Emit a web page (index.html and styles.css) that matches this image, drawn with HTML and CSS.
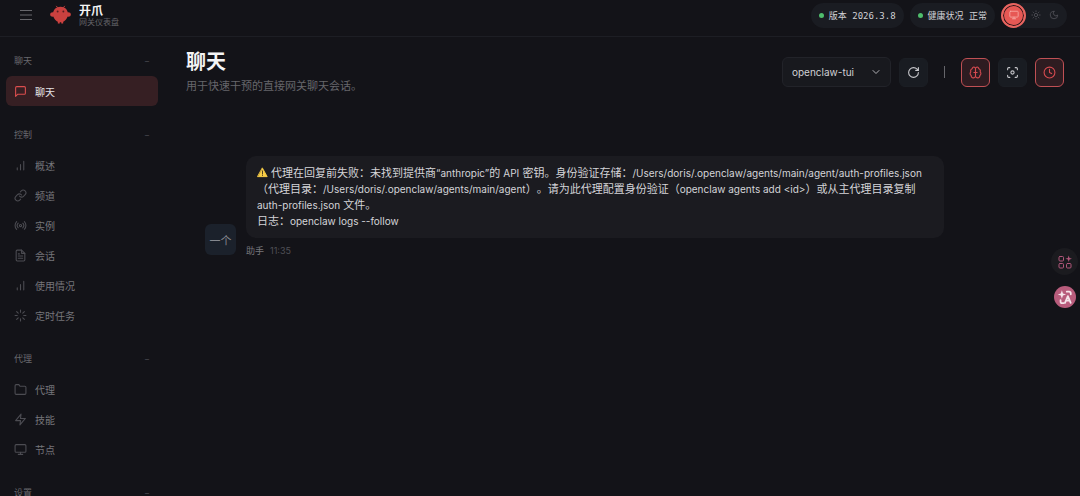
FILE: index.html
```html
<!DOCTYPE html>
<html lang="zh-CN">
<head>
    <meta charset="UTF-8">
    <meta name="viewport" content="width=device-width, initial-scale=1.0">
    <title>开爪 - 网关仪表盘</title>
    <link rel="stylesheet" href="styles.css">
</head>
<body>
    <header class="topbar">
        <button class="menu-btn" type="button" aria-label="菜单">
            <svg viewBox="0 0 12 12"><path d="M0 1.500h12M0 6h12M0 10.500h12"/></svg>
        </button>
        <div class="brand">
            <svg class="brand-logo" viewBox="0 0 22 20">
                <path class="feeler" d="M8 2 6.500.8M14 2 15.500.8"/>
                <ellipse class="claw" cx="3" cy="9.500" rx="2.800" ry="2.300"/>
                <ellipse class="claw" cx="19" cy="9.500" rx="2.800" ry="2.300"/>
                <path class="claw" d="M11 1.300c4.900 0 7.800 3.300 7.800 7.600 0 3.600-2.300 6.800-5 8.100v2h-2v-1.500h-1.600V19h-2v-2c-2.700-1.300-5-4.500-5-8.100 0-4.300 2.900-7.600 7.800-7.600z"/>
                <circle class="eye" cx="8" cy="6.300" r="1"/>
                <circle class="eye" cx="14" cy="6.300" r="1"/>
            </svg>
            <div class="brand-text">
                <div class="brand-title">开爪</div>
                <div class="brand-sub">网关仪表盘</div>
            </div>
        </div>
        <div class="status-bar">
            <div class="pill"><span class="dot"></span><span>版本 2026.3.8</span></div>
            <div class="pill"><span class="dot"></span><span>健康状况 正常</span></div>
            <div class="theme-toggle">
                <button class="theme-btn active" type="button" aria-label="跟随系统">
                    <svg viewBox="0 0 24 24"><rect x="2" y="3" width="20" height="14" rx="2"/><path d="M8 21h8M12 17v4"/></svg>
                </button>
                <button class="theme-btn" type="button" aria-label="浅色">
                    <svg viewBox="0 0 24 24"><circle cx="12" cy="12" r="4"/><path d="M12 2v2M12 20v2M4.900 4.900l1.400 1.400M17.700 17.700l1.400 1.400M2 12h2M20 12h2M4.900 19.100l1.400-1.400M17.700 6.300l1.400-1.400"/></svg>
                </button>
                <button class="theme-btn" type="button" aria-label="深色">
                    <svg viewBox="0 0 24 24"><path d="M12 3a6 6 0 0 0 9 9 9 9 0 1 1-9-9z"/></svg>
                </button>
            </div>
        </div>
    </header>

    <div class="shell-body">
        <nav class="sidebar">
            <section class="nav-group">
                <button class="nav-label" type="button"><span>聊天</span><span class="collapse">−</span></button>
                <a class="nav-item active" href="#chat">
                    <svg viewBox="0 0 24 24"><path d="M21 15a2 2 0 0 1-2 2H7l-4 4V5a2 2 0 0 1 2-2h14a2 2 0 0 1 2 2z"/></svg>聊天
                </a>
            </section>
            <section class="nav-group">
                <button class="nav-label" type="button"><span>控制</span><span class="collapse">−</span></button>
                <a class="nav-item" href="#overview">
                    <svg viewBox="0 0 24 24"><path d="M6 20v-4M12 20V10M18 20V4"/></svg>概述
                </a>
                <a class="nav-item" href="#channels">
                    <svg viewBox="0 0 24 24"><path d="M10 13a5 5 0 0 0 7.540.540l3-3a5 5 0 0 0-7.070-7.070l-1.720 1.710"/><path d="M14 11a5 5 0 0 0-7.540-.540l-3 3a5 5 0 0 0 7.070 7.070l1.710-1.710"/></svg>频道
                </a>
                <a class="nav-item" href="#instances">
                    <svg viewBox="0 0 24 24"><circle cx="12" cy="12" r="2"/><path d="M4.900 19.100C1 15.200 1 8.800 4.900 4.900M7.800 16.200c-2.300-2.300-2.300-6.100 0-8.500M16.200 7.800c2.300 2.300 2.300 6.100 0 8.500M19.100 4.900C23 8.800 23 15.100 19.100 19"/></svg>实例
                </a>
                <a class="nav-item" href="#sessions">
                    <svg viewBox="0 0 24 24"><path d="M14 2H6a2 2 0 0 0-2 2v16a2 2 0 0 0 2 2h12a2 2 0 0 0 2-2V8z"/><path d="M14 2v6h6M16 13H8M16 17H8M10 9H8"/></svg>会话
                </a>
                <a class="nav-item" href="#usage">
                    <svg viewBox="0 0 24 24"><path d="M6 20v-4M12 20V10M18 20V4"/></svg>使用情况
                </a>
                <a class="nav-item" href="#cron">
                    <svg viewBox="0 0 24 24"><path d="M12 2v4M12 18v4M4.900 4.900l2.900 2.900M16.200 16.200l2.900 2.900M2 12h4M18 12h4M4.900 19.100l2.900-2.900M16.200 7.800l2.900-2.900"/></svg>定时任务
                </a>
            </section>
            <section class="nav-group">
                <button class="nav-label" type="button"><span>代理</span><span class="collapse">−</span></button>
                <a class="nav-item" href="#agents">
                    <svg viewBox="0 0 24 24"><path d="M22 19a2 2 0 0 1-2 2H4a2 2 0 0 1-2-2V5a2 2 0 0 1 2-2h5l2 3h9a2 2 0 0 1 2 2z"/></svg>代理
                </a>
                <a class="nav-item" href="#skills">
                    <svg viewBox="0 0 24 24"><path d="M13 2 3 14h9l-1 8 10-12h-9z"/></svg>技能
                </a>
                <a class="nav-item" href="#nodes">
                    <svg viewBox="0 0 24 24"><rect x="2" y="3" width="20" height="14" rx="2"/><path d="M8 21h8M12 17v4"/></svg>节点
                </a>
            </section>
            <section class="nav-group">
                <button class="nav-label" type="button"><span>设置</span><span class="collapse">−</span></button>
            </section>
        </nav>

        <main class="content">
            <div class="page-head">
                <div>
                    <h1 class="page-title">聊天</h1>
                    <p class="page-sub">用于快速干预的直接网关聊天会话。</p>
                </div>
                <div class="controls">
                    <select class="session-select" aria-label="会话">
                        <option>openclaw-tui</option>
                    </select>
                    <button class="icon-btn" type="button" aria-label="刷新">
                        <svg viewBox="0 0 24 24"><path d="M21 12a9 9 0 1 1-9-9c2.520 0 4.930 1 6.740 2.740L21 8"/><path d="M21 3v5h-5"/></svg>
                    </button>
                    <span class="divider"></span>
                    <button class="icon-btn active" type="button" aria-label="思考过程">
                        <svg viewBox="0 0 24 24"><path d="M12 5a3 3 0 1 0-5.997.125 4 4 0 0 0-2.526 5.770 4 4 0 0 0 .556 6.588A4 4 0 1 0 12 18z"/><path d="M12 5a3 3 0 1 1 5.997.125 4 4 0 0 1 2.526 5.770 4 4 0 0 1-.556 6.588A4 4 0 1 1 12 18z"/><path d="M9 12h6"/></svg>
                    </button>
                    <button class="icon-btn" type="button" aria-label="专注模式">
                        <svg viewBox="0 0 24 24"><path d="M3 7V5a2 2 0 0 1 2-2h2M21 7V5a2 2 0 0 0-2-2h-2M3 17v2a2 2 0 0 0 2 2h2M21 17v2a2 2 0 0 1-2 2h-2"/><circle cx="12" cy="12" r="3"/></svg>
                    </button>
                    <button class="icon-btn active" type="button" aria-label="定时会话">
                        <svg viewBox="0 0 24 24"><circle cx="12" cy="12" r="10"/><path d="M12 6v6l4 2"/></svg>
                    </button>
                </div>
            </div>

            <div class="thread">
                <div class="avatar">一个</div>
                <div class="message">
                    <div class="bubble">
                        <svg class="warn" viewBox="0 0 12 12"><path class="warn-bg" d="M6 1.300 11.100 10.500H.9z"/><path class="warn-mark" d="M6 4.300v3M6 8.700v.5"/></svg>
                        代理在回复前失败：未找到提供商<code>“anthropic”</code>的 <code>API</code> 密钥。身份验证存储：<code>/Users/doris/.openclaw/agents/main/agent/auth-profiles.json</code><br>
                        （代理目录：<code>/Users/doris/.openclaw/agents/main/agent</code>）。请为此代理配置身份验证（<code>openclaw agents add &lt;id&gt;</code>）或从主代理目录复制<br>
                        <code>auth-profiles.json</code> 文件。<br>
                        日志：<code>openclaw logs --follow</code>
                    </div>
                    <div class="message-meta"><span>助手</span><time>11:35</time></div>
                </div>
            </div>
        </main>
    </div>

    <div class="float-tools">
        <button class="float-btn" type="button" aria-label="工具">
            <svg viewBox="0 0 14 14"><rect x="1" y="1.500" width="4.500" height="4.500" rx="1"/><rect x="1" y="8.500" width="4.500" height="4.500" rx="1"/><rect x="8.500" y="8.500" width="4.500" height="4.500" rx="1"/><path class="spark" d="M10.700.5 11.500 3l2.500.8-2.500.8-.8 2.500-.8-2.500-2.500-.8L9.900 3z"/></svg>
        </button>
        <button class="float-btn translate" type="button" aria-label="翻译">
            <svg viewBox="0 0 18 18"><path class="spark" d="M5.500 1.500 6.700 5l3.500 1.200-3.500 1.200-1.200 3.500-1.200-3.500L.8 6.200 4.300 5z"/><path d="M11 3h2.500a2 2 0 0 1 2 2v1M4 12.500V14a2 2 0 0 0 2 2h1.500M9 15.500l3.200-7.500 3.200 7.500M10.300 13h3.900"/></svg>
        </button>
    </div>
</body>
</html>
```
FILE: styles.css
```css
* {
    box-sizing: border-box;
}
body {
    margin: 0;
    height: 100vh;
    overflow: hidden;
    display: flex;
    flex-direction: column;
    background: #131318;
    color: #d4d4d8;
    font-family: Inter, "Noto Sans CJK SC", sans-serif;
    font-size: 11px;
}
button {
    border: 0;
    padding: 0;
    margin: 0;
    background: none;
    color: inherit;
    font: inherit;
}
svg {
    display: block;
    fill: none;
    stroke: currentColor;
    stroke-width: 2;
    stroke-linecap: round;
    stroke-linejoin: round;
}

/* top bar */
.topbar {
    display: flex;
    align-items: center;
    flex-shrink: 0;
    height: 37px;
    padding: 0 13px 6px 20px;
    border-bottom: 1px solid #1d1e24;
}
.menu-btn svg {
    width: 12px;
    height: 12px;
    stroke: #66666b;
    stroke-width: 1;
}
.brand {
    display: flex;
    align-items: center;
    gap: 8px;
    margin-left: 18px;
}
.brand-logo {
    width: 21px;
    height: 20px;
    stroke: none;
}
.claw { fill: #cb413f; }
.feeler { stroke: #a83a3a; stroke-width: 1; }
.eye { fill: #571d20; }
.brand-title {
    color: #f4f4f5;
    font-size: 12px;
    font-weight: 700;
    line-height: 13px;
}
.brand-sub {
    color: #626267;
    font-size: 8px;
    line-height: 10px;
}
.status-bar {
    display: flex;
    align-items: center;
    gap: 6px;
    margin-left: auto;
}
.pill {
    display: flex;
    align-items: center;
    gap: 5px;
    height: 25px;
    padding: 0 8px;
    border-radius: 13px;
    background: #1a1c22;
    color: #d0d0d4;
    font-family: "DejaVu Sans Mono", "Noto Sans CJK SC", monospace;
    font-size: 9px;
}
.dot {
    width: 5px;
    height: 5px;
    border-radius: 50%;
    background: #4fbd6c;
}
.theme-toggle {
    display: flex;
    align-items: center;
    gap: 2px;
    height: 25px;
    padding-right: 5px;
    border-radius: 13px;
    background: #1a1c22;
}
.theme-btn {
    display: grid;
    place-items: center;
    width: 16px;
    height: 16px;
    border-radius: 50%;
    color: #505158;
}
.theme-btn svg {
    width: 10px;
    height: 10px;
}
.theme-btn.active {
    width: 25px;
    height: 25px;
    border: 2px solid #e96560;
    background: #e75854;
    box-shadow: inset 0 0 0 1px #2a1518;
    color: #f8aaa3;
}

/* sidebar */
.shell-body {
    display: flex;
    flex: 1;
    min-height: 0;
}
.sidebar {
    flex: 0 0 165px;
    padding: 8px 7px 0 6px;
    overflow: hidden;
}
.nav-group {
    margin-bottom: 13px;
}
.nav-label {
    display: flex;
    align-items: center;
    justify-content: space-between;
    width: 100%;
    height: 30px;
    margin-bottom: 1px;
    padding: 0 8px;
    color: #68686d;
    font-size: 9px;
}
.collapse {
    color: #45454b;
}
.nav-item {
    display: flex;
    align-items: center;
    gap: 8px;
    height: 30px;
    padding: 0 8px;
    border-radius: 6px;
    color: #75757a;
    font-size: 10px;
    text-decoration: none;
}
.nav-item svg {
    width: 13px;
    height: 13px;
    stroke: #4c4c52;
}
.nav-item.active {
    background: #361f23;
    color: #e4e4e7;
}
.nav-item.active svg {
    stroke: #d94e4e;
}

/* content */
.content {
    flex: 1;
    min-width: 0;
    padding: 12px 16px 0 21px;
}
.page-head {
    display: flex;
    justify-content: space-between;
    align-items: flex-start;
}
.page-title {
    margin: 0;
    color: #f4f4f5;
    font-size: 20px;
    font-weight: 700;
    line-height: 26px;
}
.page-sub {
    margin: 3px 0 0;
    color: #66666b;
    font-size: 11px;
    line-height: 16px;
}
.controls {
    display: flex;
    align-items: center;
    gap: 8px;
    padding-top: 8px;
}
.session-select {
    appearance: none;
    width: 109px;
    height: 30px;
    padding: 0 9px;
    border: 1px solid #222329;
    border-radius: 6px;
    background: #18191e url("data:image/svg+xml,%3Csvg xmlns='http://www.w3.org/2000/svg' width='8' height='8' viewBox='0 0 8 8' fill='none' stroke='%23b0b0b5' stroke-linecap='round'%3E%3Cpath d='M1 2.500l3 3 3-3'/%3E%3C/svg%3E") no-repeat right 10px center;
    color: #d0d0d4;
    font-family: inherit;
    font-size: 10px;
}
.icon-btn {
    display: grid;
    place-items: center;
    width: 29px;
    height: 29px;
    border: 1px solid #1b1e24;
    border-radius: 6px;
    background: #191c22;
    color: #c8c8cc;
}
.icon-btn svg {
    width: 13px;
    height: 13px;
}
.icon-btn.active {
    border-color: #c05054;
    background: #2e1c21;
    color: #d64b50;
}
.divider {
    width: 1px;
    height: 12px;
    margin: 0 8px;
    background: #66666b;
}

/* chat */
.thread {
    display: flex;
    align-items: flex-end;
    gap: 10px;
    padding: 62px 120px 0 19px;
}
.avatar {
    display: grid;
    place-items: center;
    flex: 0 0 31px;
    height: 31px;
    margin-bottom: 4px;
    border-radius: 6px;
    background: #1b212b;
    color: #85888f;
    font-size: 11px;
}
.message {
    flex: 1;
    min-width: 0;
}
.bubble {
    padding: 9px 11px;
    border-radius: 10px;
    background: #1b1b20;
    color: #d4d4d8;
    line-height: 16px;
    text-spacing-trim: space-all;
}
.bubble code {
    font-family: inherit;
    font-size: 10px;
}
.warn {
    display: inline-block;
    width: 11px;
    height: 11px;
    vertical-align: -1px;
    stroke: none;
}
.warn-bg { fill: #f8cd46; stroke: #f8cd46; stroke-width: 1; }
.warn-mark { stroke: #3d3320; stroke-width: 1; }
.message-meta {
    display: flex;
    align-items: center;
    gap: 6px;
    margin-top: 5px;
    color: #77777c;
    font-size: 9px;
    line-height: 16px;
}
.message-meta time {
    color: #505056;
}

/* floating tools over the page edge */
.float-tools {
    position: fixed;
    right: 2px;
    top: 248px;
    display: flex;
    flex-direction: column;
    align-items: center;
    gap: 11px;
}
.float-btn {
    display: grid;
    place-items: center;
    width: 27px;
    height: 27px;
    border-radius: 50%;
    background: #1b1b1f;
    color: #b0567a;
}
.float-btn svg {
    width: 14px;
    height: 14px;
    stroke-width: 1;
}
.spark {
    fill: currentColor;
    stroke: none;
}
.float-btn.translate {
    width: 22px;
    height: 22px;
    background: #b85c7c;
    color: #f5e4ea;
}
.float-btn.translate svg {
    width: 16px;
    height: 16px;
    stroke-width: 2;
}
```
